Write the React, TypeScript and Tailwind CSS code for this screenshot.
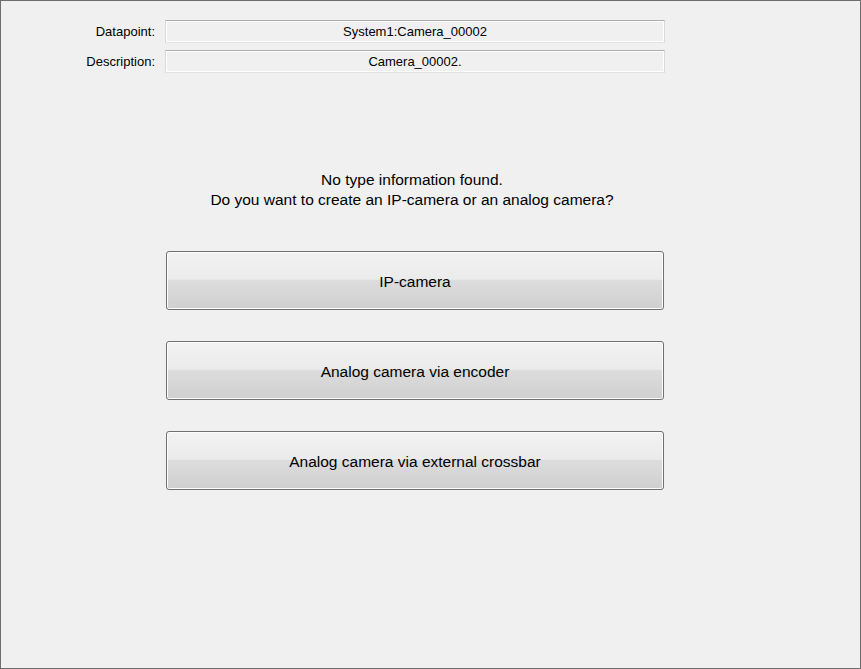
import React from "react";

function Field({ label, value }: { label: string; value: string }) {
  return (
    <div className="flex items-center h-[23px]">
      <div className="w-[154px] text-right text-[13px] leading-[15px] text-black">{label}</div>
      <div className="ml-[10px] w-[500px] h-[23px] flex items-center justify-center border border-t-[#acacac] border-l-[#dadada] border-r-[#dadada] border-b-[#e3e3e3] shadow-[inset_1px_1px_0_#ffffff,inset_-1px_-1px_0_#ffffff] bg-[#f0f0f0] text-[13px] leading-[15px] text-black">
        {value}
      </div>
    </div>
  );
}

function Btn({ children }: { children: React.ReactNode }) {
  return (
    <button className="ml-[165px] w-[498px] h-[59px] pt-[2px] rounded-[3px] border border-[#707070] shadow-[inset_0_0_0_1px_#fcfcfc] bg-[linear-gradient(to_bottom,#f2f2f2_0%,#ebebeb_48%,#dddddd_49%,#cfcfcf_100%)] text-[15.5px] leading-[18px] text-black flex items-center justify-center">
      {children}
    </button>
  );
}

export default function App() {
  return (
    <div
      className="w-[861px] h-[669px] border border-[#6d6d6d] bg-[#f0f0f0] box-border"
      style={{ fontFamily: '"Liberation Sans", Arial, sans-serif' }}
    >
      <div className="pt-[19px] flex flex-col gap-[7px]">
        <Field label="Datapoint:" value="System1:Camera_00002" />
        <Field label="Description:" value="Camera_00002." />
      </div>
      <div className="mt-[97px] ml-[162px] w-[498px] text-center text-[15.5px] leading-[20px] text-black">
        <div>No type information found.</div>
        <div>Do you want to create an IP-camera or an analog camera?</div>
      </div>
      <div className="mt-[41px] flex flex-col gap-[31px]">
        <Btn>IP-camera</Btn>
        <Btn>Analog camera via encoder</Btn>
        <Btn>Analog camera via external crossbar</Btn>
      </div>
    </div>
  );
}
